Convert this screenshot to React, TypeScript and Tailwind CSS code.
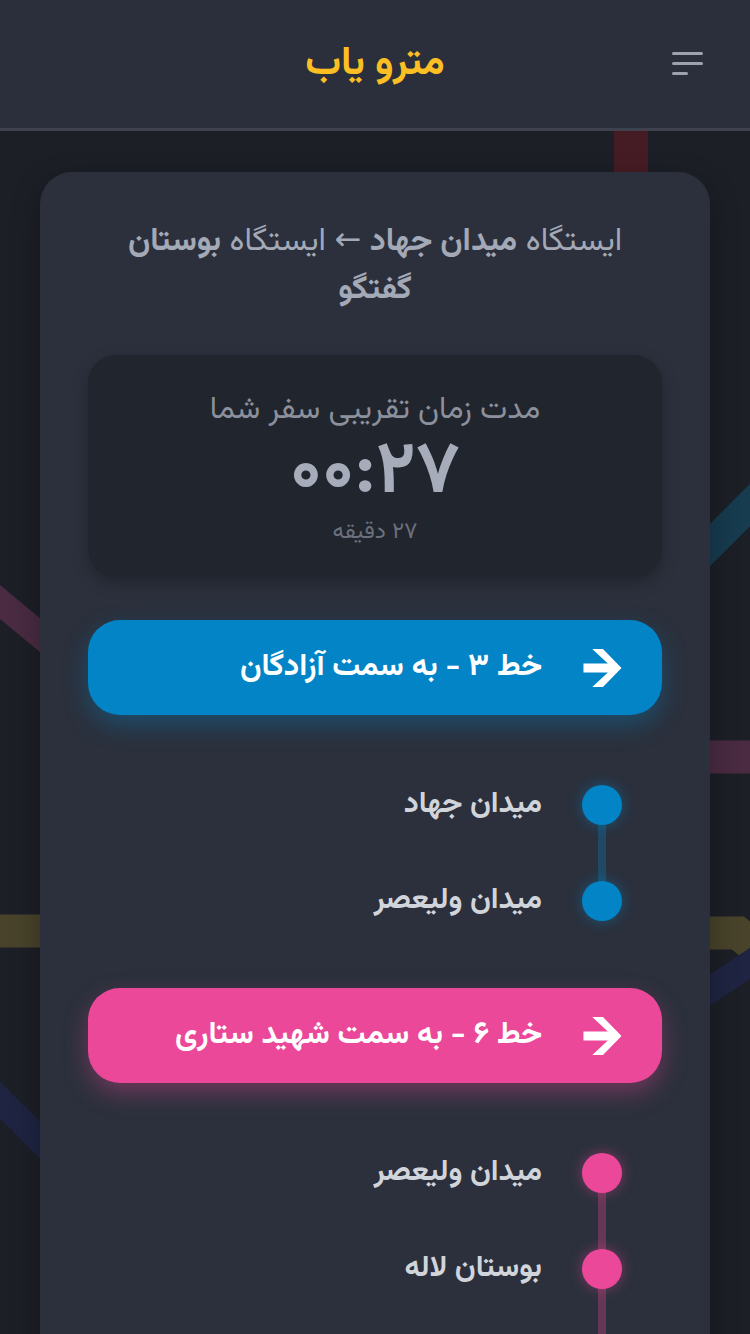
import React from "react";

const FONT = { fontFamily: '"Vazirmatn", "Noto Sans Arabic", "DejaVu Sans", sans-serif' };

function Arrow() {
  return (
    <svg width="40" height="40" viewBox="0 0 40 41" className="shrink-0">
      <polygon points="1,16 26,16 10,1 21,1 40,20.5 21,40 10,40 26,25 1,25" fill="#ffffff" />
    </svg>
  );
}

type LineProps = {
  title: string;
  btn: string;
  shadow: string;
  dot: string;
  conn: string;
  stations: string[];
  extend?: boolean;
};

function LineBlock({ title, btn, shadow, dot, conn, stations, extend }: LineProps) {
  return (
    <div>
      <div className={`flex items-center gap-10 h-[95px] rounded-[32px] pr-10 ${btn} ${shadow}`}>
        <Arrow />
        <span className="text-white text-[31px] font-bold leading-[40px]">{title}</span>
      </div>
      <div className="relative mt-[42px] pr-10">
        <div
          className={`absolute w-2 right-[56px] top-[48px] ${conn} ${extend ? "-bottom-[200px]" : "bottom-[48px]"}`}
        />
        {stations.map((s) => (
          <div key={s} className="relative flex items-center gap-10 h-[96px]">
            <div className={`w-10 h-10 rounded-full shrink-0 ${dot}`} />
            <span className="text-[#d1d5db] text-[30px] font-bold leading-[40px]">{s}</span>
          </div>
        ))}
      </div>
    </div>
  );
}

export default function App() {
  return (
    <div dir="rtl" style={FONT} className="relative h-[1334px] w-[750px] overflow-hidden bg-[#1c1f26]">
      <svg className="absolute inset-0" width="750" height="1334" viewBox="0 0 750 1334">
        <line x1="631" y1="0" x2="631" y2="500" stroke="#461c24" strokeWidth="34" />
        <line x1="-100" y1="519" x2="100" y2="685" stroke="#4a2b42" strokeWidth="26" />
        <line x1="650" y1="757" x2="760" y2="757" stroke="#4a2b42" strokeWidth="33" />
        <line x1="-10" y1="931" x2="100" y2="931" stroke="#48432a" strokeWidth="33" />
        <polyline points="650,933 738,933 800,985" fill="none" stroke="#48432a" strokeWidth="33" />
        <line x1="650" y1="605" x2="800" y2="455" stroke="#173b4f" strokeWidth="30" />
        <line x1="-50" y1="1050" x2="100" y2="1200" stroke="#1f2442" strokeWidth="26" />
        <line x1="680" y1="1010" x2="800" y2="930" stroke="#1f2442" strokeWidth="26" />
      </svg>

      <header className="relative z-10 h-[131px] bg-[#2b2f3b] border-b-[3px] border-[#3e424e] flex items-center justify-center">
        <div className="absolute right-[47px] top-[52px] flex flex-col items-start gap-[7px]" dir="ltr">
          <span className="block w-[31px] h-[3px] rounded-full bg-[#9ca3af]" />
          <span className="block w-[31px] h-[3px] rounded-full bg-[#9ca3af]" />
          <span className="block w-[16px] h-[3px] rounded-full bg-[#9ca3af]" />
        </div>
        <h1 className="text-[#fbbf24] text-[40px] font-bold leading-[50px]">مترو یاب</h1>
      </header>

      <main className="relative z-10 px-10 pt-[41px]">
        <div className="rounded-[32px] bg-[#2b303c] px-12 pt-[46px] pb-20 shadow-[0_10px_30px_rgba(0,0,0,0.3)]">
          <p className="text-center text-[#a3a9b6] text-[32px] leading-[48px] px-2">
            ایستگاه <b className="font-bold">میدان جهاد</b> ← ایستگاه{" "}
            <b className="font-bold">بوستان گفتگو</b>
          </p>

          <div className="mt-[41px] h-[222px] rounded-[28px] bg-[#21252e] shadow-[0_6px_16px_rgba(0,0,0,0.25)] flex flex-col items-center pt-[36px]">
            <div className="text-[#8b909c] text-[31px] leading-[40px] h-[40px]">مدت زمان تقریبی سفر شما</div>
            <div dir="ltr" className="mt-[8px] text-[#a6acb9] text-[73px] font-bold leading-[70px] h-[70px]">
              ۰۰:۲۷
            </div>
            <div className="mt-[8px] text-[#6b707c] text-[23px] leading-[30px] h-[30px]">۲۷ دقیقه</div>
          </div>

          <div className="mt-[43px]">
            <LineBlock
              title="خط ۳ - به سمت آزادگان"
              btn="bg-[#0284c7]"
              shadow="shadow-[0_10px_24px_rgba(2,132,199,0.35)]"
              dot="bg-[#0284c7] shadow-[0_0_14px_rgba(2,132,199,0.45)]"
              conn="bg-[#0284c7]/30"
              stations={["میدان جهاد", "میدان ولیعصر"]}
            />
          </div>
          <div className="mt-[39px]">
            <LineBlock
              title="خط ۶ - به سمت شهید ستاری"
              btn="bg-[#ec4899]"
              shadow="shadow-[0_10px_24px_rgba(236,72,153,0.35)]"
              dot="bg-[#ec4899] shadow-[0_0_14px_rgba(236,72,153,0.45)]"
              conn="bg-[#ec4899]/30"
              stations={["میدان ولیعصر", "بوستان لاله"]}
              extend
            />
          </div>
        </div>
      </main>
    </div>
  );
}
